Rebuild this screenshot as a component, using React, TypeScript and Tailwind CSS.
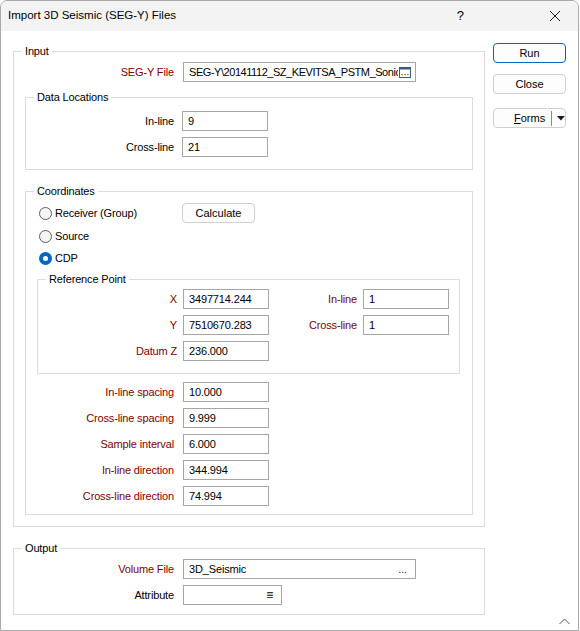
import React from "react";

const FONT = "font-['Liberation_Sans',Arial,sans-serif]";

function Group({
  label,
  className,
  children,
}: {
  label: string;
  className: string;
  children: React.ReactNode;
}) {
  return (
    <div className={`border border-[#dcdcdc] ${className}`}>
      <div className="mt-[-7px] ml-[8px] px-[3px] w-fit bg-white leading-[13px] text-black">
        {label}
      </div>
      {children}
    </div>
  );
}

function Box({
  w,
  className = "",
  children,
}: {
  w: string;
  className?: string;
  children?: React.ReactNode;
}) {
  return (
    <div
      className={`${w} h-[20px] border border-[#a6a6a6] bg-white flex items-center pl-[5px] pr-[4px] text-black ${className}`}
    >
      {children}
    </div>
  );
}

function Row({
  label,
  red,
  lw,
  gap,
  w,
  className = "",
  children,
}: {
  label: string;
  red?: boolean;
  lw: string;
  gap: string;
  w: string;
  className?: string;
  children?: React.ReactNode;
}) {
  return (
    <div className={`flex items-center h-[20px] ${className}`}>
      <div className={`${lw} text-right ${red ? "text-[#800000]" : "text-black"}`}>{label}</div>
      <div className={gap}>
        <Box w={w}>{children}</Box>
      </div>
    </div>
  );
}

function Radio({ checked, label }: { checked?: boolean; label: string }) {
  return (
    <div className="flex items-center">
      {checked ? (
        <div className="w-[13px] h-[13px] rounded-full bg-[#0067c0] flex items-center justify-center">
          <div className="w-[5px] h-[5px] rounded-full bg-white" />
        </div>
      ) : (
        <div className="w-[13px] h-[13px] rounded-full border border-[#5c5c5c] bg-[#f5f5f5]" />
      )}
      <span className="ml-[3px] text-black">{label}</span>
    </div>
  );
}

function Button({
  className = "",
  children,
}: {
  className?: string;
  children: React.ReactNode;
}) {
  return (
    <div
      className={`h-[20px] rounded-[4px] border bg-[#fdfdfd] flex items-center justify-center text-black ${className}`}
    >
      {children}
    </div>
  );
}

function BrowseIcon() {
  return (
    <svg width="12" height="11" viewBox="0 0 12 11">
      <rect x="0.5" y="0.5" width="11" height="10" fill="#fff" stroke="#3c5a7a" />
      <rect x="1" y="1" width="10" height="1.5" fill="#3c5a7a" />
      <rect x="2.5" y="7" width="1.2" height="1.2" fill="#6b4a00" />
      <rect x="5.4" y="7" width="1.2" height="1.2" fill="#6b4a00" />
      <rect x="8.3" y="7" width="1.2" height="1.2" fill="#6b4a00" />
    </svg>
  );
}

export default function App() {
  return (
    <div className={`w-[580px] h-[631px] bg-white ${FONT} text-[11px] tracking-[-0.15px]`}>
      <div className="relative w-[579px] h-[631px] border border-[#a9a9a9] rounded-t-[7px] bg-white overflow-hidden">
        {/* Title bar */}
        <div className="h-[30px] bg-[#f3f3f3] flex items-center pl-[7px] text-[11.5px] tracking-normal text-black">
          <span>Import 3D Seismic (SEG-Y) Files</span>
          <span className="ml-auto mr-[85px] text-[13px]">?</span>
          <svg width="12" height="12" viewBox="0 0 12 12" className="mr-[17px]">
            <path d="M1 1 L11 11 M11 1 L1 11" stroke="#1a1a1a" strokeWidth="1" />
          </svg>
        </div>

        <div className="flex pl-[12px]">
          {/* Left column */}
          <div className="w-[472px]">
            <Group label="Input" className="mt-[20px] pb-[11px]">
              <div className="mt-[4px] flex items-center h-[20px]">
                <div className="w-[160px] text-right text-[#800000]">SEG-Y File</div>
                <div className="ml-[9px]">
                  <Box w="w-[233px]">
                    <div className="flex-1 overflow-hidden whitespace-nowrap tracking-[-0.45px]">
                      SEG-Y\20141112_SZ_KEVITSA_PSTM_Sonic.sgy
                    </div>
                    <div className="ml-[1px] flex items-center">
                      <BrowseIcon />
                    </div>
                  </Box>
                </div>
              </div>

              <Group label="Data Locations" className="mt-[15px] ml-[11px] w-[448px] pb-[12px]">
                <Row label="In-line" lw="w-[148px]" gap="ml-[8px]" w="w-[86px]" className="mt-[7px]">
                  9
                </Row>
                <Row label="Cross-line" lw="w-[148px]" gap="ml-[8px]" w="w-[86px]" className="mt-[6px]">
                  21
                </Row>
              </Group>

              <Group label="Coordinates" className="mt-[21px] ml-[11px] w-[448px] pb-[8px]">
                <div className="mt-[5px] flex items-center h-[20px]">
                  <div className="w-[156px] pl-[13px]">
                    <Radio label="Receiver (Group)" />
                  </div>
                  <Button className="w-[73px] border-[#d0d0d0] tracking-normal">Calculate</Button>
                </div>
                <div className="mt-[3px] h-[20px] flex items-center pl-[13px]">
                  <Radio label="Source" />
                </div>
                <div className="mt-[2px] h-[20px] flex items-center pl-[13px]">
                  <Radio checked label="CDP" />
                </div>

                <Group label="Reference Point" className="mt-[11px] ml-[11px] w-[423px] pb-[12px]">
                  <div className="mt-[3px] flex">
                    <div className="flex flex-col gap-[6px]">
                      <Row label="X" red lw="w-[139px]" gap="ml-[6px]" w="w-[86px]">
                        3497714.244
                      </Row>
                      <Row label="Y" red lw="w-[139px]" gap="ml-[6px]" w="w-[86px]">
                        7510670.283
                      </Row>
                      <Row label="Datum Z" red lw="w-[139px]" gap="ml-[6px]" w="w-[86px]">
                        236.000
                      </Row>
                    </div>
                    <div className="flex flex-col gap-[6px]">
                      <Row label="In-line" red lw="w-[88px]" gap="ml-[6px]" w="w-[86px]">
                        1
                      </Row>
                      <Row label="Cross-line" red lw="w-[88px]" gap="ml-[6px]" w="w-[86px]">
                        1
                      </Row>
                    </div>
                  </div>
                </Group>

                <div className="mt-[8px] flex flex-col gap-[6px]">
                  <Row label="In-line spacing" red lw="w-[148px]" gap="ml-[9px]" w="w-[86px]">
                    10.000
                  </Row>
                  <Row label="Cross-line spacing" red lw="w-[148px]" gap="ml-[9px]" w="w-[86px]">
                    9.999
                  </Row>
                  <Row label="Sample interval" red lw="w-[148px]" gap="ml-[9px]" w="w-[86px]">
                    6.000
                  </Row>
                  <Row label="In-line direction" red lw="w-[148px]" gap="ml-[9px]" w="w-[86px]">
                    344.994
                  </Row>
                  <Row label="Cross-line direction" red lw="w-[148px]" gap="ml-[9px]" w="w-[86px]">
                    74.994
                  </Row>
                </div>
              </Group>
            </Group>

            <Group label="Output" className="mt-[21px] pb-[9px]">
              <div className="mt-[4px] flex items-center h-[20px]">
                <div className="w-[160px] text-right text-[#800000]">Volume File</div>
                <div className="ml-[9px]">
                  <Box w="w-[233px]">
                    <div className="flex-1">3D_Seismic</div>
                    <div className="mr-[4px] text-[#1a1a50]">...</div>
                  </Box>
                </div>
              </div>
              <div className="mt-[6px] flex items-center h-[20px]">
                <div className="w-[160px] text-right text-black">Attribute</div>
                <div className="ml-[9px]">
                  <Box w="w-[99px]">
                    <div className="flex-1" />
                    <div className="mr-[4px] text-[12px] leading-none">≡</div>
                  </Box>
                </div>
              </div>
            </Group>
          </div>

          {/* Right column buttons */}
          <div className="ml-[8px] flex flex-col tracking-normal">
            <Button className="mt-[12px] w-[73px] border-[#0067c0]">Run</Button>
            <Button className="mt-[11px] w-[73px] border-[#d0d0d0]">Close</Button>
            <Button className="mt-[14px] w-[73px] border-[#d0d0d0] justify-start">
              <span className="ml-[20px]">
                <span className="underline">F</span>orms
              </span>
              <div className="ml-[6px] w-px h-[15px] bg-[#8a8a8a]" />
              <svg width="8" height="5" viewBox="0 0 8 5" className="ml-[5px]">
                <path d="M0 0 L8 0 L4 4.5 Z" fill="#1a1a1a" />
              </svg>
            </Button>
          </div>
        </div>

        {/* Collapse chevron */}
        <svg
          width="11"
          height="7"
          viewBox="0 0 11 7"
          className="absolute right-[8px] bottom-[5px]"
        >
          <path d="M0.5 6 L5.5 1 L10.5 6" fill="none" stroke="#555" strokeWidth="1" />
        </svg>
      </div>
    </div>
  );
}
